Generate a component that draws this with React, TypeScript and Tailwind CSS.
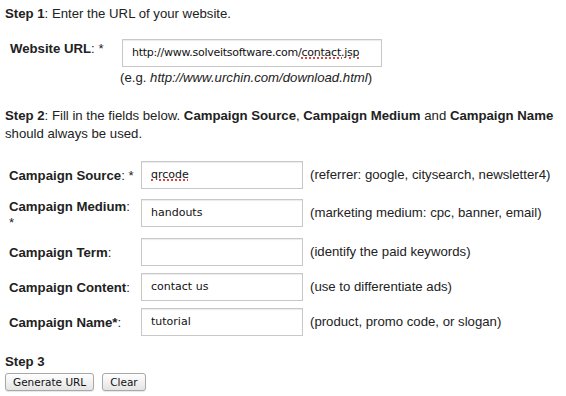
import React from "react";

const inputBox =
  "box-border h-[28px] border border-[#c8c8c8] bg-white shadow-[inset_0_1px_1px_rgba(0,0,0,0.08)] flex items-center pl-[9px] text-[11px] text-[#111] [font-family:'DejaVu_Sans',sans-serif]";

const btn =
  "h-[18px] px-[7px] rounded-[3px] border border-[#a8a8a8] bg-gradient-to-b from-white to-[#e4e4e4] text-[10.5px] leading-[16px] text-[#111] [font-family:'DejaVu_Sans',sans-serif] shadow-[0_1px_1px_rgba(0,0,0,0.1)]";

const spellCls = "underline decoration-dotted decoration-[#e04040] decoration-2 underline-offset-2";

function Field({ value, spell }: { value?: string; spell?: boolean }) {
  return (
    <div className={`${inputBox} w-[162px]`}>
      {value ? spell ? <span className={spellCls}>{value}</span> : <span>{value}</span> : null}
    </div>
  );
}

function Row({
  label,
  value,
  help,
  spell,
  h,
}: {
  label: React.ReactNode;
  value?: string;
  help: string;
  spell?: boolean;
  h: string;
}) {
  return (
    <div className={`flex items-start ${h}`}>
      <div className="w-[141px] pl-[9px] font-bold leading-[16px] pt-[7px]">{label}</div>
      <Field value={value} spell={spell} />
      <div className="pl-[7px] pt-[6px] leading-[16px]">{help}</div>
    </div>
  );
}

export default function App() {
  return (
    <div className="w-[566px] h-[396px] bg-white text-[#222] text-[13.2px] [font-family:'Liberation_Sans',Arial,sans-serif] overflow-hidden">
      <div className="pl-[5px] pt-[5px] leading-[18px]">
        <b>Step 1</b>: Enter the URL of your website.
      </div>
      <div className="flex items-start mt-[16px]">
        <div className="w-[122px] pl-[10px] pt-[2px] font-bold leading-[16px]">
          Website URL<span className="font-normal">: *</span>
        </div>
        <div className={`${inputBox} w-[260px] overflow-hidden whitespace-nowrap`}>
          <span className="tracking-[-0.25px]">
            http://www.solveitsoftware.com/<span className={spellCls}>contact.jsp</span>
          </span>
        </div>
      </div>
      <div className="pl-[120px] pt-[2px] leading-[18px]">
        (e.g. <i>http://www.urchin.com/download.html</i>)
      </div>
      <div className="pl-[5px] pt-[20px] leading-[18px]">
        <b>Step 2</b>: Fill in the fields below. <b>Campaign Source</b>, <b>Campaign Medium</b> and <b>Campaign Name</b>
        <br />
        should always be used.
      </div>
      <div className="mt-[18px]">
        <Row
          h="h-[38px]"
          label={
            <>
              Campaign Source<span className="font-normal">: *</span>
            </>
          }
          value="qrcode"
          spell
          help="(referrer: google, citysearch, newsletter4)"
        />
        <div className="flex items-start h-[39px]">
          <div className="w-[141px] pl-[9px] font-bold leading-[16px]">
            Campaign Medium<span className="font-normal">:</span>
            <br />
            <span className="font-normal">*</span>
          </div>
          <Field value="handouts" />
          <div className="pl-[7px] pt-[6px] leading-[16px]">(marketing medium: cpc, banner, email)</div>
        </div>
        <Row
          h="h-[35px]"
          label={
            <>
              Campaign Term<span className="font-normal">:</span>
            </>
          }
          help="(identify the paid keywords)"
        />
        <Row
          h="h-[35px]"
          label={
            <>
              Campaign Content<span className="font-normal">:</span>
            </>
          }
          value="contact us"
          help="(use to differentiate ads)"
        />
        <Row
          h="h-[35px]"
          label={
            <>
              Campaign Name*<span className="font-normal">:</span>
            </>
          }
          value="tutorial"
          help="(product, promo code, or slogan)"
        />
      </div>
      <div className="pl-[5px] pt-[10px] font-bold leading-[18px]">Step 3</div>
      <div className="flex gap-[8px] pl-[5px] pt-[2px]">
        <button className={btn}>Generate URL</button>
        <button className={btn}>Clear</button>
      </div>
    </div>
  );
}
